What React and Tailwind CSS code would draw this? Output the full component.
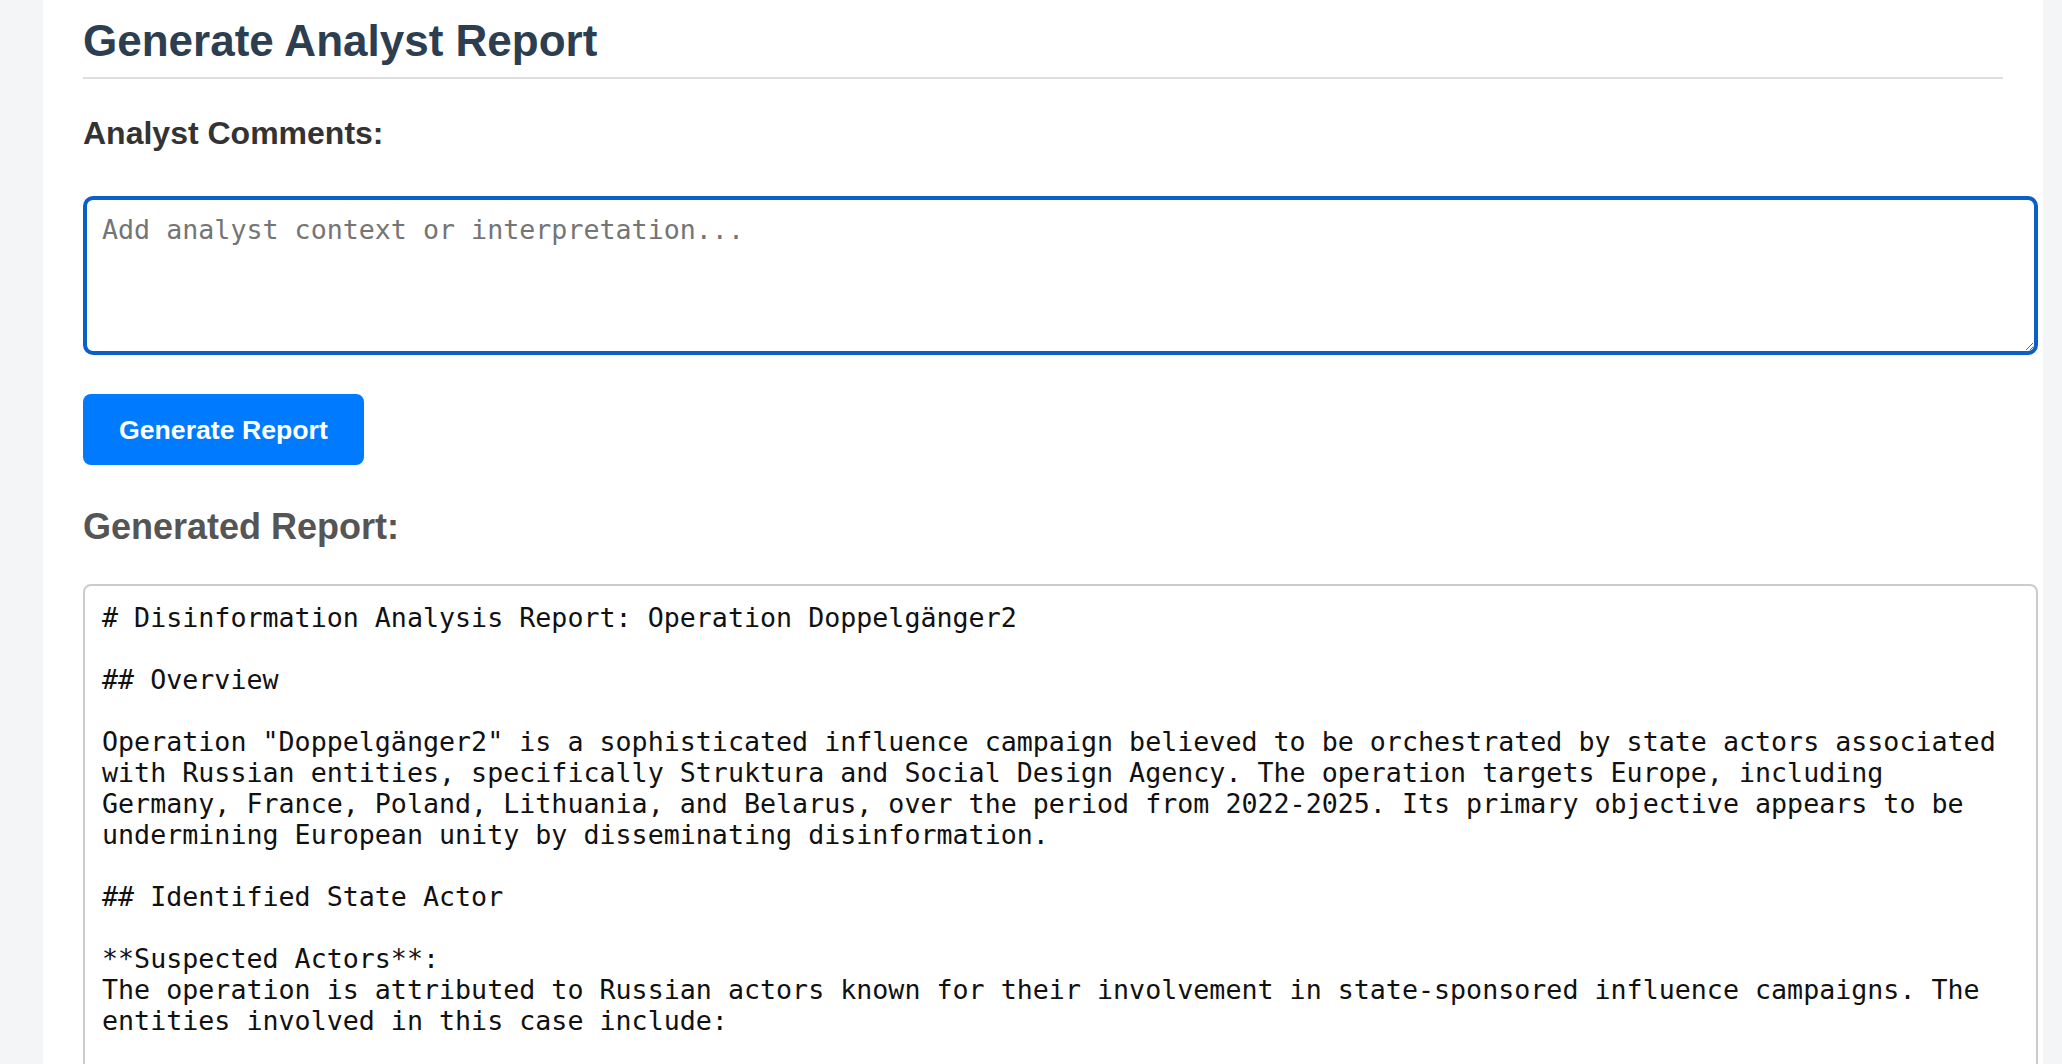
import React from 'react';

const reportText = [
  '# Disinformation Analysis Report: Operation Doppelgänger2',
  '',
  '## Overview',
  '',
  'Operation "Doppelgänger2" is a sophisticated influence campaign believed to be orchestrated by state actors associated',
  'with Russian entities, specifically Struktura and Social Design Agency. The operation targets Europe, including',
  'Germany, France, Poland, Lithuania, and Belarus, over the period from 2022-2025. Its primary objective appears to be',
  'undermining European unity by disseminating disinformation.',
  '',
  '## Identified State Actor',
  '',
  '**Suspected Actors**:',
  'The operation is attributed to Russian actors known for their involvement in state-sponsored influence campaigns. The',
  'entities involved in this case include:',
  '',
  '',
].join('\n');

export default function App() {
  return (
    <div className="h-[1064px] overflow-hidden bg-[#f4f5f7]">
      <div className="ml-[43px] w-[2000px] h-full bg-white px-[40px] font-['Liberation_Sans',Arial,sans-serif]">
        {/* Header */}
        <h2 className="pt-[16px] pb-[11px] border-b-2 border-[#dedede] text-[44px] leading-[50px] font-bold text-[#2c3e50]">
          Generate Analyst Report
        </h2>

        {/* Comments */}
        <label className="block mt-[36px] text-[32px] leading-[37px] font-bold text-[#333333]">
          Analyst Comments:
        </label>
        <textarea
          className="block mt-[44px] w-[1955px] h-[159px] rounded-[10px] border-4 border-[#0b5fc8] bg-white pt-[14px] px-[15px] text-[26.67px] leading-[31px] font-['DejaVu_Sans_Mono',monospace] text-[#111] placeholder:text-[#757575] outline-none"
          placeholder="Add analyst context or interpretation..."
        />

        <button className="mt-[39px] h-[71px] px-[36px] rounded-[8px] bg-[#007bff] text-white text-[26.67px] font-bold">
          Generate Report
        </button>

        {/* Output */}
        <h3 className="mt-[41px] text-[36px] leading-[41px] font-bold text-[#555555]">
          Generated Report:
        </h3>
        <div className="mt-[37px] w-[1955px] rounded-[8px] border-2 border-[#cccccc] bg-white pt-[16px] pb-[16px] pl-[17px] pr-[16px] whitespace-pre font-['DejaVu_Sans_Mono',monospace] text-[26.67px] leading-[31px] text-[#111]">
          {reportText}
        </div>
      </div>
    </div>
  );
}
